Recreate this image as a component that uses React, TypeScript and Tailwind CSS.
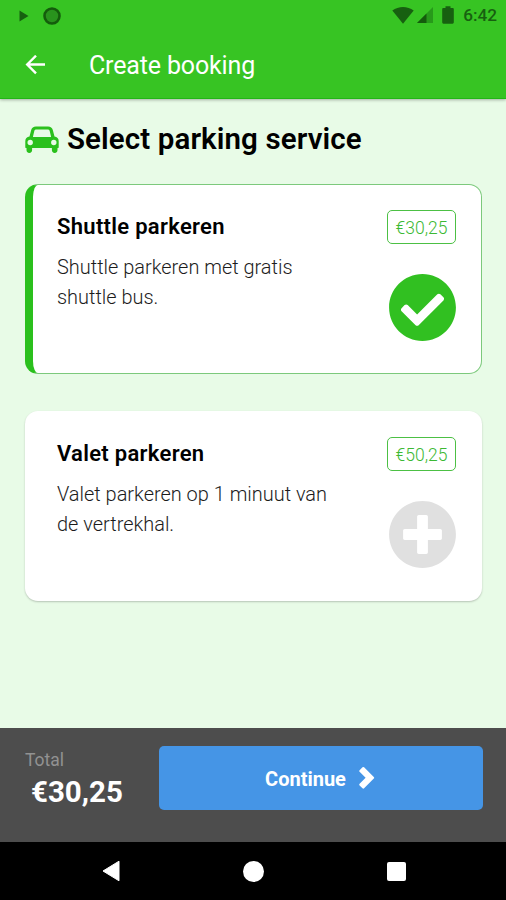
import React from 'react';
import { FaCheckCircle, FaPlusCircle } from 'react-icons/fa';

interface Service {
  id: string;
  title: string;
  description: string;
  price: string;
}

const SERVICES: Service[] = [
  {
    id: 'shuttle',
    title: 'Shuttle parkeren',
    description: 'Shuttle parkeren met gratis shuttle bus.',
    price: '€30,25',
  },
  {
    id: 'valet',
    title: 'Valet parkeren',
    description: 'Valet parkeren op 1 minuut van de vertrekhal.',
    price: '€50,25',
  },
];

const CarIcon: React.FC = () => (
  <svg width="34" height="27" viewBox="0 0 34 27" className="shrink-0" fill="#2ac01d">
    <path
      fillRule="evenodd"
      d="M11 .5h12c2.600 0 4.200 1.200 4.800 3.600l1.700 6.500c2.600.2 4.200 2 4.200 4.600v5.700c0 .8-.4 1.200-1.200 1.200v2a2.800 2.800 0 0 1-5.600 0v-2H7.100v2a2.800 2.800 0 0 1-5.600 0v-2c-.8 0-1.200-.4-1.200-1.200v-5.700c0-2.600 1.600-4.400 4.200-4.600l1.700-6.500C6.800 1.700 8.400.5 11 .5zM11.300 3.500c-1.100 0-1.700.5-2 1.500L7.900 11h18.200l-1.400-6c-.3-1-.9-1.500-2-1.500zM5.200 13.800a2.700 2.700 0 1 0 0 5.400 2.700 2.700 0 0 0 0-5.400zm23.600 0a2.700 2.700 0 1 0 0 5.400 2.700 2.700 0 0 0 0-5.400z"
    />
  </svg>
);

const StatusBar: React.FC = () => (
  <div className="h-[31px] flex items-center justify-between pl-[19px] pr-[9px] text-[#176010]">
    <div className="flex items-center gap-[14px]">
      <svg width="10" height="12" viewBox="0 0 10 12" fill="currentColor">
        <path d="M.5.5 9.500 6 .5 11.500z" />
      </svg>
      <svg width="18" height="18" viewBox="0 0 18 18">
        <circle cx="9" cy="9" r="7.500" fill="#29931d" stroke="#145c0c" strokeWidth="2.600" />
      </svg>
    </div>
    <div className="flex items-center">
      <svg width="22" height="18" viewBox="0 0 22 18" fill="currentColor">
        <path d="M.3 4.500C6.500-.2 15.500-.2 21.700 4.500L11 17.700z" />
      </svg>
      <svg width="18" height="18" viewBox="0 0 18 18" className="ml-[2px]">
        <path d="M17 1v16H1z" fill="#279a1a" />
        <path d="M10.500 7.500V17H1z" fill="#145c0c" />
      </svg>
      <svg width="12" height="18" viewBox="0 0 12 18" fill="currentColor" className="ml-[8px]">
        <path d="M3.500.3h5V2h2c.8 0 1.300.5 1.300 1.300v13c0 .9-.5 1.400-1.300 1.400h-9c-.8 0-1.300-.5-1.300-1.400v-13C.2 2.500.7 2 1.500 2h2z" />
      </svg>
      <span className="ml-[9px] pt-px text-[17.200px] leading-none font-medium">6:42</span>
    </div>
  </div>
);

const ServiceCard: React.FC<{ service: Service; selected: boolean }> = ({ service, selected }) => (
  <button
    className={`w-full h-[190px] rounded-[13px] bg-white flex items-start justify-between text-left ${
      selected
        ? 'border border-l-[8px] border-[#7cc97c] border-l-[#2ac01d] pl-[24px] pt-[25px] pr-[25px]'
        : 'pl-[32px] pt-[26px] pr-[26px] shadow-[0_1px_2px_rgba(0,0,0,0.22)]'
    }`}
  >
    <div className="w-[285px] pt-[3px]">
      <h3 className="text-[22px] leading-[28px] tracking-[0.3px] font-semibold text-black">{service.title}</h3>
      <p className="mt-[12px] text-[19.950px] leading-[29.500px] font-light text-[#1c1c1c]">{service.description}</p>
    </div>
    <div className="w-[69px] flex flex-col items-start">
      <span className="w-[69px] h-[34px] flex items-center justify-center rounded-[5px] border border-[#4cc044] pt-[2px] text-[17.500px] text-[#3cb934] font-light">
        {service.price}
      </span>
      {selected ? (
        <FaCheckCircle size={69} className="mt-[29px] ml-px text-[#31c021]" />
      ) : (
        <FaPlusCircle size={69} className="mt-[29px] ml-px text-[#e0e0e0]" />
      )}
    </div>
  </button>
);

const App: React.FC = () => {
  const [selected] = React.useState('shuttle');

  return (
    <div className="w-[506px] h-[900px] flex flex-col overflow-hidden bg-[#e8fbe7] font-['Roboto',sans-serif]">
      {/* App bar */}
      <header className="h-[99px] shrink-0 bg-[#37c423] border-b border-[#22b616] shadow-[0_1px_3px_rgba(0,0,0,0.3)]">
        <StatusBar />
        <div className="h-[67px] flex items-center pl-[25px]">
          <svg width="21" height="20" viewBox="0 0 21 20" fill="none" stroke="#fff" strokeWidth="2.400">
            <path d="M20 9.500H2.500M11 .7 2.200 9.500l8.800 8.800" />
          </svg>
          <h1 className="ml-[43px] pt-[2px] text-[25px] leading-none tracking-[-0.15px] text-white">Create booking</h1>
        </div>
      </header>

      {/* Services */}
      <main className="flex-1 px-[25px] pt-[22px]">
        <div className="h-[36px] flex items-center gap-[8px]">
          <CarIcon />
          <h2 className="pt-[2px] text-[29.500px] leading-none tracking-[0.100px] font-semibold text-black whitespace-nowrap">
            Select parking service
          </h2>
        </div>
        <div className="mt-[27px] mr-[-1px] flex flex-col gap-[37px]">
          {SERVICES.map(service => (
            <ServiceCard key={service.id} service={service} selected={selected === service.id} />
          ))}
        </div>
      </main>

      {/* Total and continue */}
      <footer className="h-[114px] shrink-0 bg-[#4d4d4d] flex items-start pl-[25px] pr-[23px] pt-[18px]">
        <div className="w-[134px]">
          <div className="mt-[4px] text-[17.500px] leading-[20px] text-[#929292]">Total</div>
          <div className="mt-[7px] pl-[6px] text-[29.500px] leading-[30px] font-bold text-white">€30,25</div>
        </div>
        <button className="flex-1 h-[64px] rounded-[5px] bg-[#4595e6] flex items-center justify-center gap-[13px] pr-[2px] text-white">
          <span className="pt-[2px] text-[20px] font-bold">Continue</span>
          <svg width="16" height="24" viewBox="0 0 16 24" fill="#fff">
            <path d="M.6 4.200 3.500 1.300q.8-.8 1.600 0l9.700 9.700q.8.8 0 1.600l-9.700 9.700q-.8.8-1.600 0L.6 19.400q-.8-.8 0-1.600l6-6-6-6q-.8-.8 0-1.600z" />
          </svg>
        </button>
      </footer>

      {/* System navigation */}
      <nav className="h-[58px] shrink-0 bg-black flex items-center pl-[102px] gap-[123px]">
        <svg width="18" height="22" viewBox="0 0 18 22" fill="#fff">
          <path d="M17 1.200v19.600L1 11z" stroke="#fff" strokeLinejoin="round" />
        </svg>
        <div className="w-[21px] h-[21px] rounded-full bg-white" />
        <div className="w-[19px] h-[19px] rounded-[2px] bg-white" />
      </nav>
    </div>
  );
};

export default App;
